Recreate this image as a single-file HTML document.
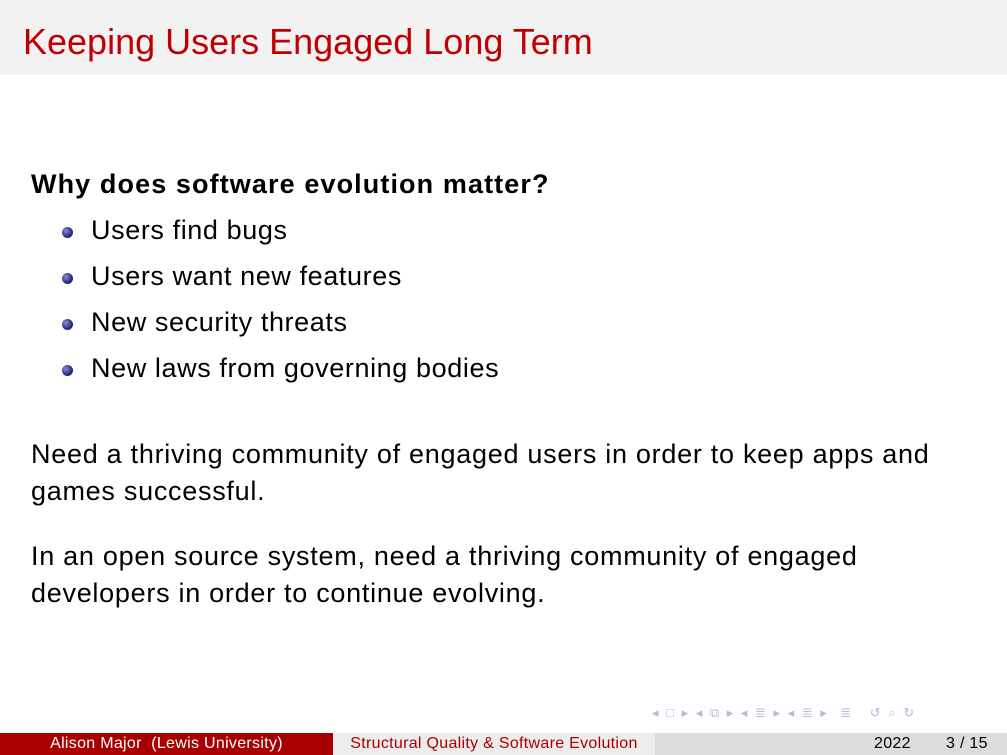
<!DOCTYPE html>
<html><head><meta charset="utf-8"><style>
body{margin:0;width:1007px;height:755px;position:relative;overflow:hidden;background:#fff;font-family:"Liberation Sans",sans-serif;}
.t{position:absolute;white-space:nowrap;color:#000;}
#hdr{position:absolute;left:0;top:0;width:1007px;height:75px;background:#f2f2f2;}
#title{left:23px;top:21px;font-size:36px;color:#c00000;}
.b{font-size:27px;letter-spacing:0.6px;}
.dot{position:absolute;width:11px;height:11px;border-radius:50%;background:radial-gradient(circle at 35% 35%,#8a8ad0,#2a2a80 60%,#101050);}
#ft{position:absolute;left:0;top:733px;height:22px;width:1007px;font-size:16px;letter-spacing:0.3px;}
#ft div{position:absolute;top:0;height:22px;line-height:22px;}
</style></head><body>
<div id="hdr"></div>
<div class="t" id="title">Keeping Users Engaged Long Term</div>
<div class="t b" style="left:31px;top:169px;font-weight:bold;letter-spacing:1.1px">Why does software evolution matter?</div>
<div class="dot" style="left:62px;top:227px"></div><div class="t b" style="left:91px;top:215px">Users find bugs</div>
<div class="dot" style="left:62px;top:273px"></div><div class="t b" style="left:91px;top:261px">Users want new features</div>
<div class="dot" style="left:62px;top:319px"></div><div class="t b" style="left:91px;top:307px">New security threats</div>
<div class="dot" style="left:62px;top:365px"></div><div class="t b" style="left:91px;top:353px">New laws from governing bodies</div>
<div class="t b" style="left:31px;top:439px;letter-spacing:0.72px">Need a thriving community of engaged users in order to keep apps and</div>
<div class="t b" style="left:31px;top:476px;letter-spacing:0.72px">games successful.</div>
<div class="t b" style="left:31px;top:541px;letter-spacing:0.72px">In an open source system, need a thriving community of engaged</div>
<div class="t b" style="left:31px;top:578px;letter-spacing:0.72px">developers in order to continue evolving.</div>
<div class="t" style="left:652px;top:705px;font-size:13px;color:#b8b8d8;letter-spacing:2px">◂ □ ▸ ◂ ⧉ ▸ ◂ ≣ ▸ ◂ ≣ ▸ &nbsp;≣ &nbsp;&nbsp;↺ ⌕ ↻</div>
<div id="ft">
<div style="left:0;width:333px;background:#a80000;color:#fff;text-align:center">Alison Major &nbsp;(Lewis University)</div>
<div style="left:333px;width:322px;background:#ececec;color:#a80000;text-align:center">Structural Quality &amp; Software Evolution</div>
<div style="left:655px;width:352px;background:#dcdcdc;color:#000"><span style="position:absolute;left:219px">2022</span><span style="position:absolute;left:291px">3 / 15</span></div>
</div>
</body></html>
